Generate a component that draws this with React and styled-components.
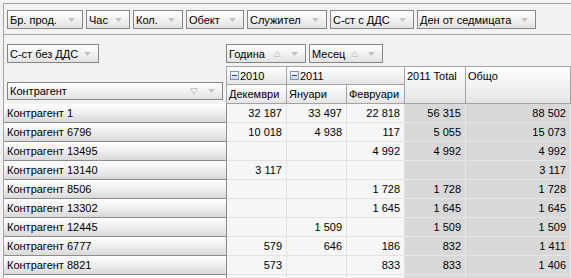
import React from 'react';
import styled, { createGlobalStyle } from 'styled-components';

const GlobalStyle = createGlobalStyle`
  html, body {
    margin: 0;
    padding: 0;
    background: #f2f2f2;
    overflow: hidden;
  }
  body {
    font-family: "Liberation Sans", Arial, sans-serif;
    font-size: 11px;
    color: #000;
  }
`;

const filterFields = [
  { title: 'Бр. прод.', width: 76 },
  { title: 'Час', width: 44 },
  { title: 'Кол.', width: 50 },
  { title: 'Обект', width: 58 },
  { title: 'Служител', width: 80 },
  { title: 'С-ст с ДДС', width: 84 },
  { title: 'Ден от седмицата', width: 119 },
];

const rows = [
  ['Контрагент 1', '32 187', '33 497', '22 818', '56 315', '88 502'],
  ['Контрагент 6796', '10 018', '4 938', '117', '5 055', '15 073'],
  ['Контрагент 13495', '', '', '4 992', '4 992', '4 992'],
  ['Контрагент 13140', '3 117', '', '', '', '3 117'],
  ['Контрагент 8506', '', '', '1 728', '1 728', '1 728'],
  ['Контрагент 13302', '', '', '1 645', '1 645', '1 645'],
  ['Контрагент 12445', '', '1 509', '', '1 509', '1 509'],
  ['Контрагент 6777', '579', '646', '186', '832', '1 411'],
  ['Контрагент 8821', '573', '', '833', '833', '1 406'],
  ['', '', '', '', '', ''],
];

const DownArrow = () => (
  <svg width="7" height="4" viewBox="0 0 7 4">
    <path d="M0 0h7L3.5 4z" fill="#c4c4c4" />
  </svg>
);

const SortUp = () => (
  <svg width="7" height="6" viewBox="0 0 7 6">
    <path d="M3.5 0.5L6.5 5.5H0.5z" fill="none" stroke="#c8c8c8" strokeWidth="1" />
  </svg>
);

const FilterIcon = () => (
  <svg width="8" height="7" viewBox="0 0 8 7">
    <path d="M0.5 0.5H7.5L4 6.5z" fill="none" stroke="#c8c8c8" strokeWidth="1" />
  </svg>
);

const FieldButton = ({ title, width, height, sort, filter }) => (
  <Field $width={width} $height={height}>
    <FieldText>{title}</FieldText>
    <FieldIcons>
      {sort && <SortUp />}
      {filter && <FilterIcon />}
      <DownArrow />
    </FieldIcons>
  </Field>
);

const App = () => {
  return (
    <>
      <GlobalStyle />
      <Frame>
        <FilterBar>
          {filterFields.map((f) => (
            <FieldButton key={f.title} title={f.title} width={f.width} />
          ))}
        </FilterBar>

        <Pivot>
          <DataFieldArea>
            <FieldButton title="С-ст без ДДС" width={92} />
          </DataFieldArea>
          <ColumnFieldArea>
            <FieldButton title="Година" width={80} sort />
            <FieldButton title="Месец" width={74} sort />
          </ColumnFieldArea>

          <RowFieldArea>
            <FieldButton title="Контрагент" width={216} height={18} filter />
          </RowFieldArea>

          <HeaderCell $top $col="2">
            <ExpandBox />2010
          </HeaderCell>
          <HeaderCell $top $col="3 / span 2">
            <ExpandBox />2011
          </HeaderCell>
          <HeaderCell $top $col="5" $row="2 / span 2">2011 Total</HeaderCell>
          <HeaderCell $top $col="6" $row="2 / span 2">Общо</HeaderCell>

          <HeaderCell $col="2">Декември</HeaderCell>
          <HeaderCell $col="3">Януари</HeaderCell>
          <HeaderCell $col="4">Февруари</HeaderCell>

          {rows.map((r, idx) => (
            <React.Fragment key={idx}>
              <RowHeader>{r[0]}</RowHeader>
              {r.slice(1).map((v, i) => (
                <DataCell key={i} $total={i >= 3}>{v}</DataCell>
              ))}
            </React.Fragment>
          ))}
        </Pivot>
      </Frame>
    </>
  );
};

const Frame = styled.div`
  margin: 3px 0 0 3px;
  border-top: 1px solid #a5a5a5;
  border-left: 1px solid #a5a5a5;
`;

const FilterBar = styled.div`
  display: flex;
  gap: 3px;
  height: 31px;
  padding: 6px 0 0 3px;
  box-sizing: border-box;
  border-bottom: 1px solid #a5a5a5;
`;

const Field = styled.div`
  width: ${(p) => p.$width}px;
  height: ${(p) => p.$height || 19}px;
  box-sizing: border-box;
  display: flex;
  align-items: center;
  justify-content: space-between;
  padding: 0 7px 0 2px;
  border: 1px solid #868686;
  background: linear-gradient(#ffffff, #f3f3f3 45%, #e2e2e2);
  white-space: nowrap;
  flex-shrink: 0;
`;

const FieldText = styled.span`
  line-height: 16px;
`;

const FieldIcons = styled.span`
  display: flex;
  align-items: center;
  gap: 10px;
`;

const Pivot = styled.div`
  display: grid;
  grid-template-columns: 223px 60px 60px 58px 61px 1fr;
  grid-template-rows: 31px 19px 19px repeat(10, 19px);
`;

const DataFieldArea = styled.div`
  grid-column: 1;
  grid-row: 1;
  padding: 9px 0 0 3px;
`;

const ColumnFieldArea = styled.div`
  grid-column: 2 / span 5;
  grid-row: 1;
  display: flex;
  gap: 3px;
  padding-top: 9px;
  margin-left: -1px;
`;

const RowFieldArea = styled.div`
  grid-column: 1;
  grid-row: 2 / span 2;
  display: flex;
  align-items: flex-end;
  padding: 0 0 4px 3px;
`;

const HeaderCell = styled.div`
  grid-column: ${(p) => p.$col};
  grid-row: ${(p) => p.$row || 'auto'};
  display: flex;
  align-items: flex-start;
  padding: 2px 3px 0 2px;
  box-sizing: border-box;
  line-height: 14px;
  white-space: nowrap;
  background: linear-gradient(#fdfdfd, #f2f2f2 50%, #e4e4e4);
  border-right: 1px solid #a3a3a3;
  border-bottom: 1px solid #a3a3a3;
  border-top: ${(p) => (p.$top ? '1px solid #a3a3a3' : 'none')};
  box-shadow: -1px 0 0 #a3a3a3;
`;

const ExpandBox = styled.span`
  position: relative;
  width: 9px;
  height: 9px;
  margin: 2px 1px 0 1px;
  box-sizing: border-box;
  border: 1px solid #7d96b6;
  background: linear-gradient(#f6f9fd, #c9d9ec);
  flex-shrink: 0;

  &::after {
    content: '';
    position: absolute;
    left: 1px;
    top: 3px;
    width: 5px;
    height: 1px;
    background: #27466e;
  }
`;

const RowHeader = styled.div`
  grid-column: 1;
  box-sizing: border-box;
  padding-left: 3px;
  line-height: 18px;
  white-space: nowrap;
  background: linear-gradient(#ffffff, #f0f0f0 45%, #d9d9d9);
  border-right: 1px solid #8c8c8c;
  border-bottom: 1px solid #8c8c8c;
`;

const DataCell = styled.div`
  box-sizing: border-box;
  padding-right: 4px;
  text-align: right;
  line-height: 18px;
  background: ${(p) => (p.$total ? '#d8d8d8' : '#f6f6f7')};
  border-right: 1px solid ${(p) => (p.$total ? '#e6e6e6' : '#e3e3e3')};
  border-bottom: 1px solid ${(p) => (p.$total ? '#e6e6e6' : '#e3e3e3')};
`;

export default App;
